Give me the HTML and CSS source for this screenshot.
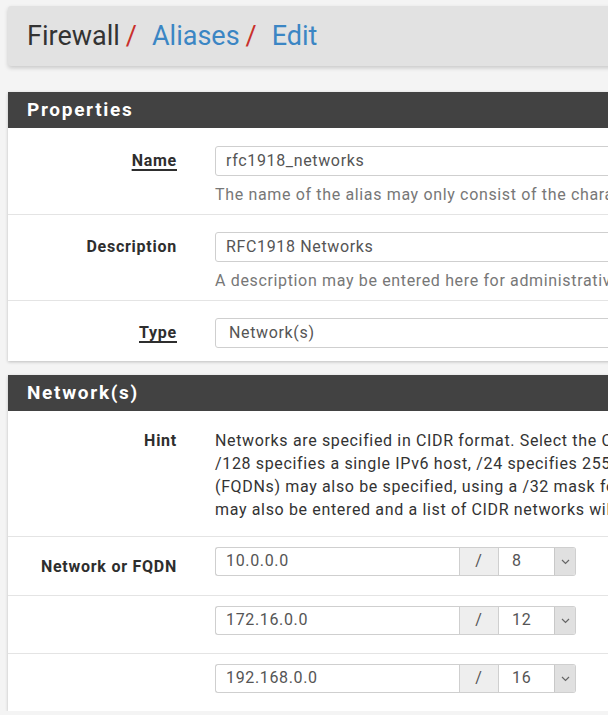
FILE: index.html
```html
<!DOCTYPE html>
<html lang="en">
<head>
<meta charset="utf-8">
<title>Firewall / Aliases / Edit</title>
<link rel="stylesheet" href="styles.css">
</head>
<body>
<div class="page">
  <div class="crumbs">
    <span class="crumb-plain">Firewall</span><span class="sep">/</span><span class="crumb-link">Aliases</span><span class="sep">/</span><span class="crumb-link">Edit</span>
  </div>

  <section class="panel">
    <h2 class="panel-heading">Properties</h2>
    <div class="row row-help">
      <div class="label"><span class="u">Name</span></div>
      <div class="field">
        <div class="input">rfc1918_networks</div>
        <div class="help">The name of the alias may only consist of the characters "a-z, A-Z, 0-9 and _".</div>
      </div>
    </div>
    <div class="row row-help">
      <div class="label">Description</div>
      <div class="field">
        <div class="input">RFC1918 Networks</div>
        <div class="help">A description may be entered here for administrative reference (not parsed).</div>
      </div>
    </div>
    <div class="row row-last">
      <div class="label"><span class="u">Type</span></div>
      <div class="field">
        <div class="input input-select">Network(s)</div>
      </div>
    </div>
  </section>

  <section class="panel">
    <h2 class="panel-heading">Network(s)</h2>
    <div class="row row-hint">
      <div class="label label-hint">Hint</div>
      <div class="field hint">
        Networks are specified in CIDR format. Select the CIDR mask that pertains to each entry. /32 specifies a single IPv4 host,<br>
        /128 specifies a single IPv6 host, /24 specifies 255.255.255.0, /64 specifies a normal IPv6 network, etc. Hostnames<br>
        (FQDNs) may also be specified, using a /32 mask for IPv4 or /128 for IPv6. An IP range such as 192.168.1.1-192.168.1.254<br>
        may also be entered and a list of CIDR networks will be derived to fill the range.
      </div>
    </div>
    <div class="row row-net">
      <div class="label label-net">Network or FQDN</div>
      <div class="field">
        <div class="net-group">
          <div class="net-addr">10.0.0.0</div>
          <div class="net-slash">/</div>
          <div class="net-mask"><span class="mask-val">8</span><span class="mask-btn"><svg width="9" height="6" viewBox="0 0 9 6"><polyline points="1,1 4.5,4.5 8,1" fill="none" stroke="#666" stroke-width="1.2"/></svg></span></div>
        </div>
      </div>
    </div>
    <div class="row row-net">
      <div class="label label-net"></div>
      <div class="field">
        <div class="net-group">
          <div class="net-addr">172.16.0.0</div>
          <div class="net-slash">/</div>
          <div class="net-mask"><span class="mask-val">12</span><span class="mask-btn"><svg width="9" height="6" viewBox="0 0 9 6"><polyline points="1,1 4.5,4.5 8,1" fill="none" stroke="#666" stroke-width="1.2"/></svg></span></div>
        </div>
      </div>
    </div>
    <div class="row row-net">
      <div class="label label-net"></div>
      <div class="field">
        <div class="net-group">
          <div class="net-addr">192.168.0.0</div>
          <div class="net-slash">/</div>
          <div class="net-mask"><span class="mask-val">16</span><span class="mask-btn"><svg width="9" height="6" viewBox="0 0 9 6"><polyline points="1,1 4.5,4.5 8,1" fill="none" stroke="#666" stroke-width="1.2"/></svg></span></div>
        </div>
      </div>
    </div>
  </section>
</div>
</body>
</html>
```

FILE: styles.css
```css
html, body {
  margin: 0;
  padding: 0;
  overflow: hidden;
}
body {
  background: #f4f4f4;
  font-family: Roboto, "Liberation Sans", sans-serif;
  font-size: 16px;
  letter-spacing: 0.65px;
  color: #333;
}
.page {
  width: 1200px;
  padding: 6px 0 0 8px;
}
.crumbs {
  height: 60px;
  line-height: 60px;
  background: #e2e2e2;
  box-shadow: 0 2px 4px rgba(0,0,0,0.18);
  border-radius: 3px;
  padding-left: 19px;
  font-size: 27px;
  letter-spacing: 0;
  white-space: nowrap;
}
.crumb-plain { color: #333; }
.crumb-link { color: #3b86c4; }
.sep { color: #c9302c; margin: 0 15px 0 6px; }

.panel {
  background: #fff;
  box-shadow: 0 1px 3px rgba(0,0,0,0.22);
  margin-top: 26px;
}
.panel + .panel { margin-top: 14px; }
.panel-heading {
  margin: 0;
  background: #424242;
  color: #fff;
  height: 36px;
  line-height: 36px;
  padding-left: 19px;
  font-size: 19px;
  font-weight: 700;
  letter-spacing: 1.7px;
}
.row {
  display: flex;
  padding: 17px 0 13px;
  border-top: 1px solid #e4e4e4;
}
.panel-heading + .row { border-top: 0; padding-top: 18px; }
.row-help { padding-bottom: 9px; }
.label {
  width: 169px;
  flex: none;
  text-align: right;
  font-weight: 700;
  letter-spacing: 0.75px;
  color: #2e2e2e;
  padding-top: 5px;
  line-height: 20px;
}
.u {
  text-decoration: underline;
  text-decoration-thickness: 2px;
  text-underline-offset: 3px;
}
.field {
  margin-left: 38px;
  flex: 1;
}
.input {
  height: 28px;
  line-height: 28px;
  border: 1px solid #cfcfcf;
  border-radius: 3px;
  padding-left: 10px;
  color: #555;
  background: #fff;
}
.input-select { padding-left: 13px; }
.help {
  margin-top: 9px;
  line-height: 20px;
  color: #777;
  white-space: nowrap;
}
.row-hint { padding: 19px 0 15px; }
.label-hint { padding-top: 0; line-height: 23px; }
.hint {
  line-height: 23px;
  white-space: nowrap;
  color: #333;
}
.row-net { padding: 10px 0 18px; }
.label-net { padding-top: 10px; }
.net-group {
  display: flex;
  width: 361px;
  height: 29px;
}
.net-addr {
  width: 233px;
  border: 1px solid #cfcfcf;
  border-right: 0;
  border-radius: 3px 0 0 3px;
  padding-left: 10px;
  line-height: 25px;
  color: #555;
}
.net-slash {
  width: 38px;
  background: #eee;
  border: 1px solid #cfcfcf;
  text-align: center;
  line-height: 26px;
  color: #555;
}
.net-mask {
  flex: 1;
  display: flex;
  border: 1px solid #cfcfcf;
  border-left: 0;
  border-radius: 0 3px 3px 0;
}
.mask-val {
  flex: 1;
  padding-left: 13px;
  line-height: 25px;
  color: #555;
}
.mask-btn {
  width: 20px;
  background: #e0e0e0;
  border-left: 1px solid #c8c8c8;
  border-radius: 0 2px 2px 0;
  display: flex;
  align-items: center;
  justify-content: center;
}
```
